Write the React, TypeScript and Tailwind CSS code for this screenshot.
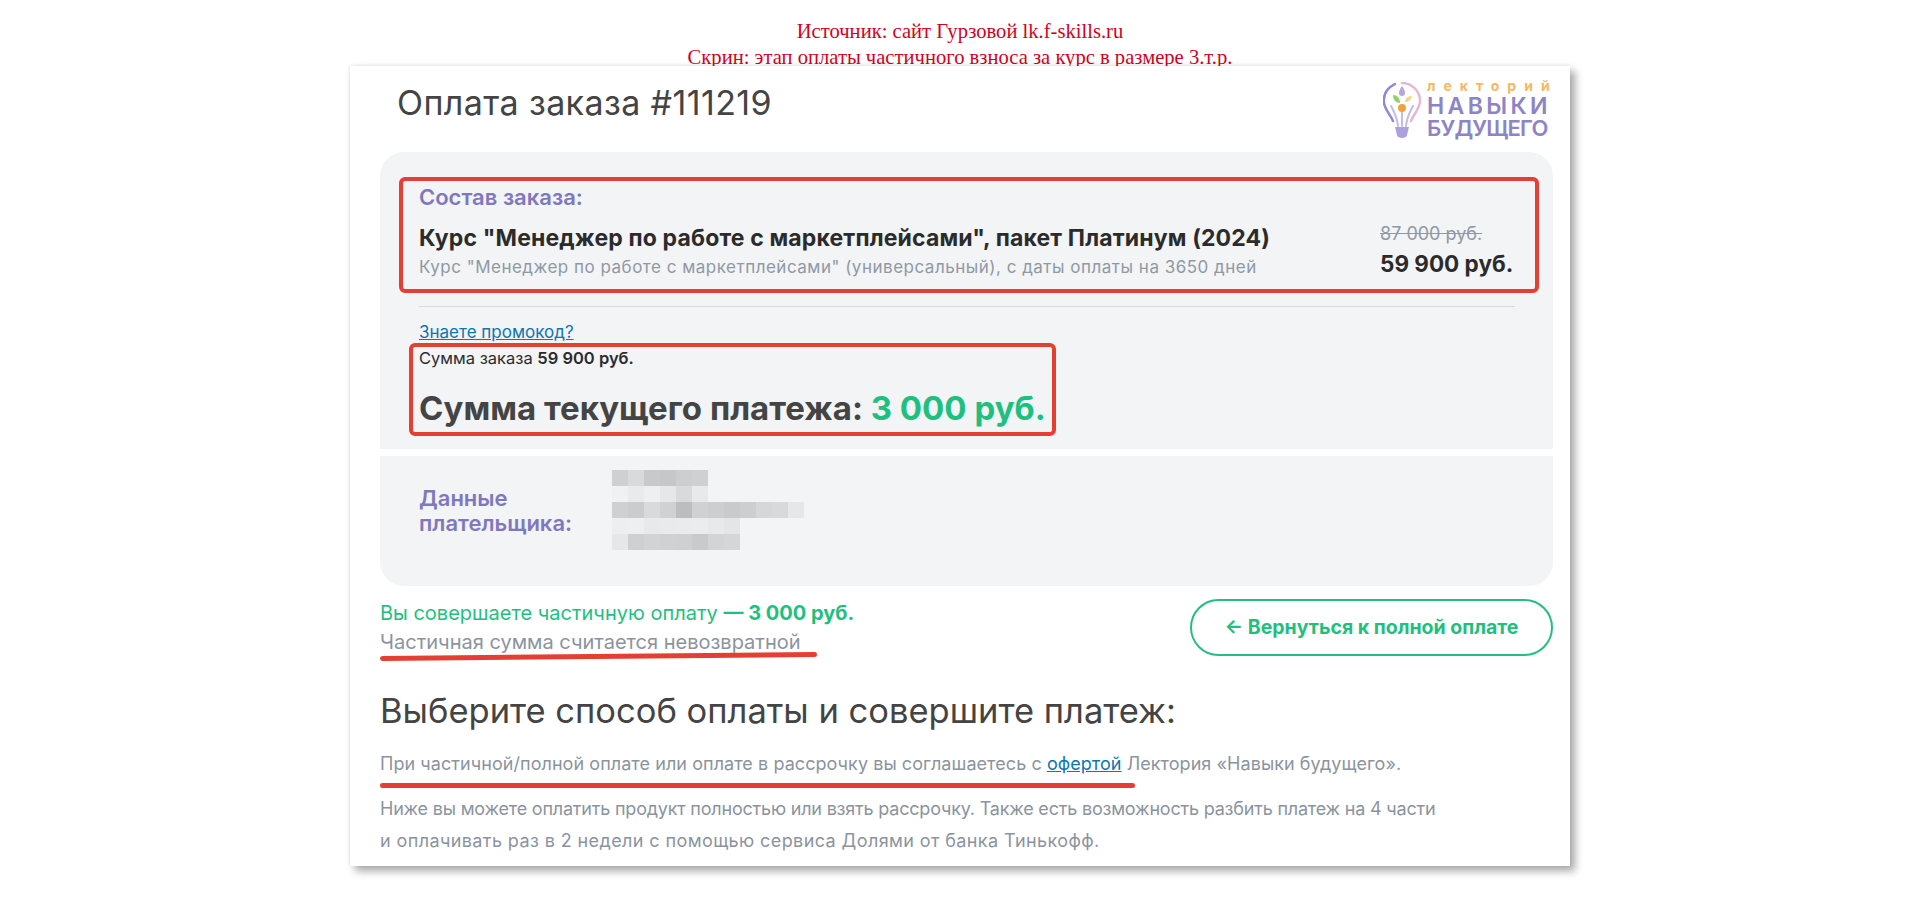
const MOSAIC: string[][] = [
  ['#cfd0d2', '#d9dadc', '#c8c9cb', '#c6c7c9', '#cdced0', '#cfd0d2'],
  ['#f0f1f3', '#e9eaec', '#eeeff1', '#e6e7e9', '#d9dadc', '#e8e9eb'],
  ['#cfd0d2', '#cbccce', '#d9dadc', '#d0d1d3', '#bcbdbf', '#d0d1d3', '#cdced0', '#c9cacc', '#cdced0', '#d6d7d9', '#d8d9db', '#e6e7e9'],
  ['#eceef0', '#eeeff1', '#e8e9eb', '#e9eaec', '#eaebed', '#ebecee', '#e8e9eb', '#e4e5e7'],
  ['#e6e7e9', '#cfd0d2', '#d2d3d5', '#d0d1d3', '#cfd0d2', '#c9cacc', '#d3d4d6', '#d5d6d8'],
];

function Logo() {
  return (
    <div className="flex items-start gap-[6px] pr-[6px] pt-[16px] leading-none text-[#8d84c6]">
      <svg width="38" height="56" viewBox="0 0 38 56" fill="none">
        <path d="M12 2C4 6 0 13 1 21c1 7 6 11 9 18" stroke="#8f88d8" strokeWidth="2.5" strokeLinecap="round" />
        <path d="M19 1c9 0 17 7 18 16 1 9-6 14-9 22" stroke="#e5b7d2" strokeWidth="2.5" strokeLinecap="round" />
        <path d="M8 24c3 6 6 10 7 20M30 24c-3 6-6 10-7 20M19 27v17" stroke="#c2bce6" strokeWidth="2" strokeLinecap="round" />
        <path d="M12 45h14l-2 8a5 3 0 0 1-10 0z" fill="#ae9fde" />
        <path d="M10 13c4 0 7 3 7 8-4 0-7-3-7-8z" fill="#8fd36e" />
        <path d="M29 14c-1 4-3 6-7 6 0-4 3-6 7-6z" fill="#f0d98c" />
        <path d="M19 4c2 3 3 5 3 7a3 3 0 0 1-6 0c0-2 1-4 3-7z" fill="#b5a6dc" />
        <circle cx="19" cy="26" r="4" fill="#f2a23c" />
      </svg>
      <div className="-mt-[2px] flex w-[120px] flex-col font-['Inter',sans-serif]">
        <span className="whitespace-nowrap text-[14px] font-bold leading-[12px] tracking-[8px] text-[#f5b85c]">лекторий</span>
        <span className="mt-[3px] whitespace-nowrap text-[23px] font-semibold leading-[22px] tracking-[3.4px]">НАВЫКИ</span>
        <span className="-mt-[1px] whitespace-nowrap text-[22px] font-semibold leading-[24px] tracking-[-0.8px]">БУДУЩЕГО</span>
      </div>
    </div>
  );
}

export default function App() {
  return (
    <div className="min-h-[900px] bg-white font-['Inter',sans-serif]">
      <div className="h-[66px] pt-[18px] text-center font-['Liberation_Serif',serif] text-[20.6px] leading-[26px] text-[#d0021b]">
        <p>Источник: сайт Гурзовой lk.f-skills.ru</p>
        <p>Скрин: этап оплаты частичного взноса за курс в размере 3.т.р.</p>
      </div>

      <div className="relative mx-auto w-[1220px] bg-white pb-[13px] pl-[30px] pr-[17px] shadow-[5px_5px_8px_rgba(0,0,0,0.35),-1px_-1px_3px_rgba(0,0,0,0.08)]">
        <div className="flex h-[86px] justify-between">
          <h1 className="pl-[17px] pt-[17px] text-[34px] font-normal leading-[40px] tracking-[0.4px] text-[#444444]">Оплата заказа #111219</h1>
          <Logo />
        </div>

        <div className="relative rounded-t-[24px] bg-[#f2f4f6] px-[39px] pb-[21px] pt-[33px]">
          <div className="absolute left-[19px] top-[25px] h-[116px] w-[1140px] rounded-[6px] border-[4px] border-[#e53f33]" />
          <div className="absolute left-[29px] top-[191px] h-[93px] w-[647px] rounded-[6px] border-[4px] border-[#e53f33]" />

          <p className="text-[22px] font-semibold leading-[24px] text-[#8078bf]">Состав заказа:</p>
          <div className="mt-[15px] flex justify-between pr-[2px]">
            <div>
              <p className="text-[23px] font-bold leading-[28px] tracking-[0.15px] text-[#2b2b2b]">Курс "Менеджер по работе с маркетплейсами", пакет Платинум (2024)</p>
              <p className="mt-[4px] text-[17px] leading-[22px] tracking-[0.5px] text-[#8f99a3]">Курс "Менеджер по работе с маркетплейсами" (универсальный), с даты оплаты на 3650 дней</p>
            </div>
            <div className="w-[132px] shrink-0 whitespace-nowrap">
              <p className="text-[18px] leading-[20px] text-[#8f99a3] line-through">87 000 руб.</p>
              <p className="mt-[5px] text-[22.5px] font-bold leading-[30px] text-[#2b2b2b]">59 900 руб.</p>
            </div>
          </div>
          <div className="mt-[27px] h-px w-[1096px] bg-[#d5d9dd]" />
          <a className="mt-[15px] block text-[17px] leading-[20px] text-[#0f75ae] underline">Знаете промокод?</a>
          <p className="mt-[6px] text-[16.5px] leading-[20px] text-[#2b2b2b]">Сумма заказа <b className="font-semibold">59 900 руб.</b></p>
          <p className="mt-[20px] text-[33px] font-bold leading-[40px] text-[#444444]">Сумма текущего платежа: <span className="text-[#1fbf80]">3 000 руб.</span></p>
        </div>

        <div className="mt-[7px] flex h-[130px] rounded-b-[24px] bg-[#f2f4f6] pl-[39px] pt-[14px]">
          <p className="mt-[16px] w-[193px] text-[22px] font-semibold leading-[25px] text-[#8078bf]">Данные<br />плательщика:</p>
          <div className="flex flex-col">
            {MOSAIC.map((row, i) => (
              <div key={i} className="flex">
                {row.map((c, j) => (
                  <div key={j} className="h-[16px] w-[16px]" style={{ backgroundColor: c }} />
                ))}
              </div>
            ))}
          </div>
        </div>

        <div className="relative mt-[13px] flex items-start justify-between">
          <div className="pt-px text-[20px] leading-[26px]">
            <p className="text-[#1fbf80]">Вы совершаете частичную оплату <b className="font-bold">— 3 000 руб.</b></p>
            <p className="mt-[3px] text-[#8b949e]">Частичная сумма считается невозвратной</p>
          </div>
          <div className="absolute left-0 top-[55px] h-[5px] w-[437px] -rotate-[0.5deg] rounded-full bg-[#e53f33]" />
          <button type="button" className="flex h-[57px] w-[363px] items-center justify-center rounded-full border-[2px] border-[#26bd85] text-[19.5px] font-bold text-[#1fbf80]">
            ← Вернуться к полной оплате
          </button>
        </div>

        <h2 className="mt-[33px] text-[34.5px] font-normal leading-[44px] text-[#444444]">Выберите способ оплаты и совершите платеж:</h2>

        <div className="relative mt-[19px] text-[18px] leading-[24px] tracking-[0.06px] text-[#8b949e]">
          <p>При частичной/полной оплате или оплате в рассрочку вы соглашаетесь с <a className="text-[#0f75ae] underline">офертой</a> Лектория «Навыки будущего».</p>
          <div className="absolute left-0 top-[31px] h-[5px] w-[755px] rounded-full bg-[#e53f33]" />
          <p className="mt-[21px] tracking-[-0.2px]">Ниже вы можете оплатить продукт полностью или взять рассрочку. Также есть возможность разбить платеж на 4 части</p>
          <p className="mt-[8px] tracking-[0.4px]">и оплачивать раз в 2 недели с помощью сервиса Долями от банка Тинькофф.</p>
        </div>
      </div>
    </div>
  );
}
